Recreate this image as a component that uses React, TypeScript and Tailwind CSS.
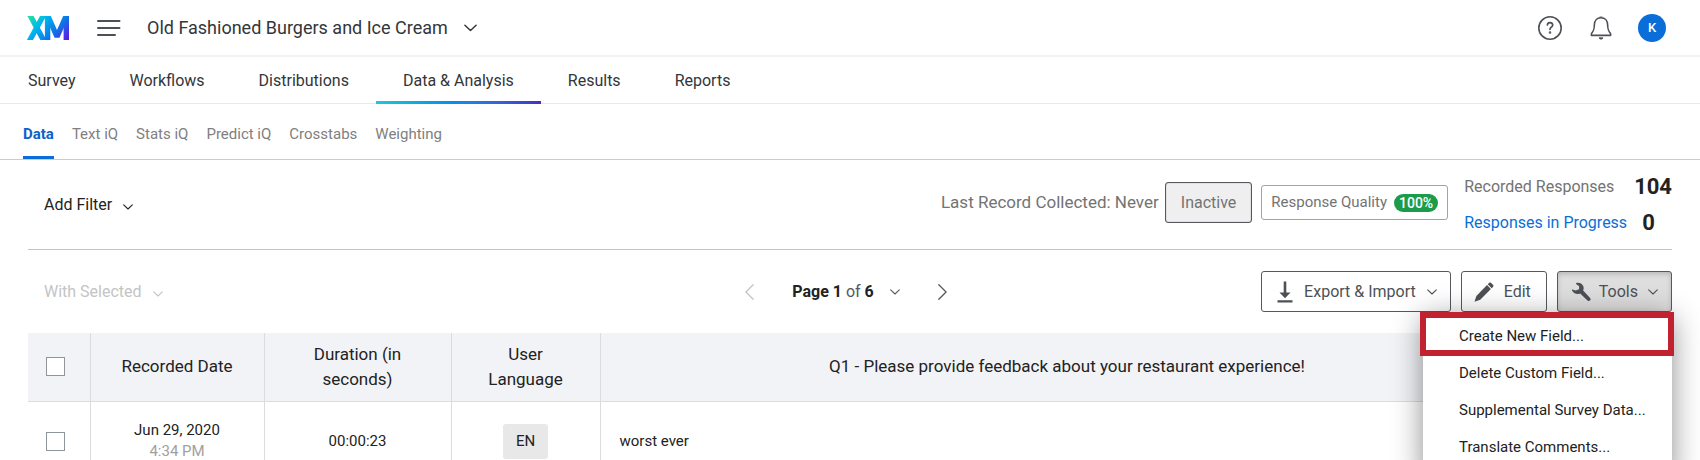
import { useState } from 'react'

const mainTabs = ['Survey', 'Workflows', 'Distributions', 'Data & Analysis', 'Results', 'Reports']
const subTabs = ['Data', 'Text iQ', 'Stats iQ', 'Predict iQ', 'Crosstabs', 'Weighting']
const toolItems = ['Delete Custom Field...', 'Supplemental Survey Data...', 'Translate Comments...']

const responses = [
  { date: 'Jun 29, 2020', time: '4:34 PM', duration: '00:00:23', language: 'EN', feedback: 'worst ever' },
]

function Chevron({ className = '' }: { className?: string }) {
  return (
    <svg viewBox="0 0 10 6" className={`fill-none stroke-current ${className}`} strokeWidth="1.1" strokeLinecap="round" strokeLinejoin="round" aria-hidden="true">
      <path d="M0.7 0.8 L5 5 L9.3 0.8" />
    </svg>
  )
}

function PageArrow({ className = '' }: { className?: string }) {
  return (
    <svg viewBox="0 0 9 16" className={`h-4 w-[9px] fill-none stroke-current ${className}`} strokeWidth="1.3" strokeLinecap="round" aria-hidden="true">
      <path d="M8.2 0.8 L0.9 8 L8.2 15.2" />
    </svg>
  )
}

function Logo() {
  return (
    <svg viewBox="0 0 42 24" className="h-6 w-[42px]" aria-label="XM">
      <defs>
        <linearGradient id="logo" x1="4" y1="0" x2="36" y2="28" gradientUnits="userSpaceOnUse">
          <stop offset="0" stopColor="#21dbaa" />
          <stop offset="0.3" stopColor="#00b4ef" />
          <stop offset="0.65" stopColor="#0a78e8" />
          <stop offset="1" stopColor="#5f1ae5" />
        </linearGradient>
      </defs>
      <g stroke="url(#logo)" fill="none" strokeWidth="5.4">
        <path d="M2.4 -2 L17.5 26" />
        <path d="M17.2 -2 L1.8 26" />
        <path d="M20.6 26 V-2.001 L20.61 -2" />
        <path d="M39.3 26 V-2.001 L39.31 -2" />
        <path d="M20 -2 L29.3 19 H30.7 L40 -2" />
      </g>
    </svg>
  )
}

function Header() {
  return (
    <header className="flex h-[57px] items-center border-b-2 border-[#f2f2f2] pl-[27px] pr-[34px]">
      <Logo />
      <button aria-label="Menu" className="ml-7 text-[#4d5156]">
        <svg viewBox="0 0 24 16" className="h-4 w-6 fill-none stroke-current" strokeWidth="2" strokeLinecap="round">
          <path d="M1 1 H22.5 M1 8 H22.5 M1 15 H18" />
        </svg>
      </button>
      <button className="ml-[26px] flex items-center gap-4 text-lg text-[#32363a]">
        Old Fashioned Burgers and Ice Cream
        <Chevron className="h-[8px] w-[13px]" />
      </button>
      <div className="ml-auto flex items-center text-[#4d5156]">
        <button aria-label="Help">
          <svg viewBox="0 0 24 24" className="size-6 fill-none stroke-current" strokeWidth="1.6" strokeLinecap="round">
            <circle cx="12" cy="12" r="11.2" />
            <path d="M9.4 9 C9.6 5.7 14.7 5.8 14.7 9.1 C14.7 11.2 12 11.2 12 13.3" strokeWidth="1.7" />
            <circle cx="12" cy="16.5" r="0.5" />
          </svg>
        </button>
        <button aria-label="Notifications" className="ml-7">
          <svg viewBox="0 0 22 24" className="h-6 w-[22px] fill-none stroke-current" strokeWidth="1.6" strokeLinejoin="round">
            <path d="M11 1.8 C6.8 1.8 4.5 4.8 4.4 8.6 C4.3 13.8 3.6 15 1.4 17.8 V19.4 H20.6 V17.8 C18.4 15 17.7 13.8 17.6 8.6 C17.5 4.8 15.2 1.8 11 1.8 Z" />
            <path d="M9 21.8 H13 C12.7 23.6 9.3 23.6 9 21.8 Z M9.5 1 H12.5" className="fill-current" strokeWidth="0.8" />
          </svg>
        </button>
        <button className="ml-[26px] size-7 rounded-full bg-[#0b6ed8] text-[13px] font-medium text-white">K</button>
      </div>
    </header>
  )
}

function DownloadIcon() {
  return (
    <svg viewBox="0 0 16 22" className="h-[22px] w-4 fill-current" aria-hidden="true">
      <path d="M6.7 0.5 H9.3 V11.5 H13.5 L8 17.3 L2.5 11.5 H6.7 Z M0.5 19.2 H15.5 V21.4 H0.5 Z" />
    </svg>
  )
}

function PencilIcon() {
  return (
    <svg viewBox="0 0 20 20" className="size-5 fill-current" aria-hidden="true">
      <path d="M0.5 19.7 L2.4 14 L13 2.9 L16.9 7 L6.2 17.8 Z" />
      <path d="M13.7 2.2 L15 0.9 C15.6 0.3 16.5 0.3 17.1 0.9 L19 2.8 C19.6 3.4 19.6 4.3 19 4.9 L17.7 6.2 Z" />
    </svg>
  )
}

function WrenchIcon() {
  return (
    <svg viewBox="0 0 24 24" className="size-5 fill-current" aria-hidden="true">
      <path d="M6.3 1.2 C9.8 0.2 13.8 1.8 14.9 5.4 C15.4 7 15.2 8.6 14.6 10.1 L22.9 19.2 C23.8 20.3 23.7 21.5 22.8 22.3 C21.9 23.1 20.7 23 19.8 22.1 L10.9 13.8 C7.3 15.5 2.7 13.8 1 9.7 L1.7 9 L5.6 10.1 L9.7 8.6 L9.8 5.2 L6 2.3 Z" />
    </svg>
  )
}

function ToolsMenu() {
  return (
    <div className="absolute right-0 top-full z-10 w-[249px] bg-white pb-3 text-[15px] text-[#222] shadow-[0_6px_28px_rgba(0,0,0,0.45)]">
      <button className="-mb-px -ml-[3px] flex h-11 w-[254px] items-center whitespace-nowrap border-6 border-[#c2222f] bg-white pl-[33px] pt-1">
        Create New Field...
      </button>
      {toolItems.map((item) => (
        <button key={item} className="flex h-[37px] w-full items-center whitespace-nowrap pl-9">
          {item}
        </button>
      ))}
    </div>
  )
}

function Checkbox({ label }: { label: string }) {
  return (
    <input type="checkbox" aria-label={label} className="mx-auto block size-[19px] appearance-none border border-[#8e959c] bg-white checked:bg-[#0b6ed8]" />
  )
}

export default function App() {
  const [tab, setTab] = useState('Data & Analysis')
  const [subTab, setSubTab] = useState('Data')
  const [toolsOpen, setToolsOpen] = useState(true)

  return (
    <div className="h-screen overflow-hidden bg-white font-[Roboto,'Liberation_Sans',sans-serif] text-base text-[#222]">
      <Header />
      <nav className="flex h-[47px] border-b border-[#e8e8e8] pl-px text-[#32363a]">
        {mainTabs.map((t) => (
          <button key={t} onClick={() => setTab(t)} className="relative px-[27px] pt-0.5">
            {t}
            {tab === t && (
              <span className="absolute inset-x-0 -bottom-px h-[3px] bg-linear-to-r from-[#21c9d0] via-[#0a8af0] to-[#4030c8]" />
            )}
          </button>
        ))}
      </nav>
      <nav className="flex h-14 gap-[18px] border-b border-[#ccc] pl-[23px] text-[15px] text-[#808080]">
        {subTabs.map((t) => (
          <button
            key={t}
            onClick={() => setSubTab(t)}
            className={`border-b-3 pt-2 ${subTab === t ? 'border-[#0b6ed8] font-bold text-[#0b62cc]' : 'border-transparent'}`}
          >
            {t}
          </button>
        ))}
      </nav>

      <main className="px-7">
        <section className="flex h-[90px] items-center justify-between border-b border-[#c4c4c4] pl-4">
          <button className="flex items-center gap-[11px]">
            Add Filter
            <Chevron className="mt-1 h-[6px] w-[10px]" />
          </button>
          <div className="flex items-center text-[#737373]">
            <div className="mb-1 flex items-center">
              <span className="mr-[6px] text-[17px]">Last Record Collected: Never</span>
              <button className="h-[41px] rounded-[3px] border border-[#55595e] bg-[#efefef] px-[15px] shadow-[inset_0_0_1px_#55595e]">Inactive</button>
              <button className="ml-[9px] flex h-[35px] items-center gap-[7px] rounded-[3px] border border-[#a3a3a3] px-[9px] text-[15px]">
                Response Quality
                <span className="rounded-full bg-[#1c9c4b] px-[5px] text-sm leading-[18px] font-medium text-white">100%</span>
              </button>
            </div>
            <dl className="ml-4 grid grid-cols-[auto_auto] items-center gap-x-[7px]">
              <dt>Recorded Responses</dt>
              <dd className="text-right text-[22px] leading-9 font-bold text-[#222]">104</dd>
              <dt><a href="#progress" className="text-[#0b6ed8]">Responses in Progress</a></dt>
              <dd className="pl-2 text-[22px] leading-9 font-bold text-[#222]">0</dd>
            </dl>
          </div>
        </section>

        <section className="grid h-[83px] grid-cols-[1fr_auto_1fr] items-center">
          <button disabled className="flex items-center gap-[11px] pl-4 text-[#c4c4c4]">
            With Selected
            <Chevron className="mt-1 h-[6px] w-[10px]" />
          </button>
          <div className="mr-2 flex items-center">
            <button disabled aria-label="Previous page" className="text-[#c4c4c4]">
              <PageArrow />
            </button>
            <button className="mx-[38px] flex items-center gap-4">
              <span><b>Page 1</b> <span className="text-[#55595e]">of</span> <b>6</b></span>
              <Chevron className="h-[6px] w-[10px] text-[#55595e]" />
            </button>
            <button aria-label="Next page" className="text-[#55595e]">
              <PageArrow className="rotate-180" />
            </button>
          </div>
          <div className="flex justify-end gap-[10px] text-[#4d5156]">
            <button className="flex h-[41px] items-center rounded-[3px] border border-[#55595e] pl-[15px] pr-[13px]">
              <DownloadIcon />
              <span className="mx-[11px]">Export &amp; Import</span>
              <Chevron className="h-[6px] w-[10px]" />
            </button>
            <button className="flex h-[41px] items-center gap-[10px] rounded-[3px] border border-[#55595e] pl-3 pr-[15px]">
              <PencilIcon />
              Edit
            </button>
            <div className="relative">
              <button
                aria-expanded={toolsOpen}
                onClick={() => setToolsOpen(!toolsOpen)}
                className="flex h-[41px] items-center rounded-[3px] border border-[#55595e] bg-[#dedede] px-[13px] shadow-[inset_0_2px_5px_rgba(0,0,0,0.18)]"
              >
                <WrenchIcon />
                <span className="ml-2 mr-[10px]">Tools</span>
                <Chevron className="h-[6px] w-[10px]" />
              </button>
              {toolsOpen && <ToolsMenu />}
            </div>
          </div>
        </section>

        <table className="w-full table-fixed border-collapse text-center text-[15px]">
          <colgroup>
            <col className="w-[62px]" />
            <col className="w-[174px]" />
            <col className="w-[187px]" />
            <col className="w-[149px]" />
            <col />
            <col className="w-[138px]" />
          </colgroup>
          <thead className="bg-[#f2f3f7] text-[17px] leading-[25px]">
            <tr className="h-[68px] border-b border-[#dcdcdc] *:font-normal">
              <th className="border-r border-[#dcdcdc] pr-[6px]"><Checkbox label="Select all" /></th>
              <th className="border-r border-[#dcdcdc] px-6">Recorded Date</th>
              <th className="border-r border-[#dcdcdc] px-11">Duration (in seconds)</th>
              <th className="border-r border-[#dcdcdc] px-6">User Language</th>
              <th className="border-r border-[#dcdcdc]">Q1 - Please provide feedback about your restaurant experience!</th>
              <th />
            </tr>
          </thead>
          <tbody>
            {responses.map((r) => (
              <tr key={r.date} className="h-20 border-b border-[#dcdcdc]">
                <td className="border-r border-[#dcdcdc] pr-[6px]"><Checkbox label={`Select ${r.date}`} /></td>
                <td className="border-r border-[#dcdcdc] leading-[21px]">
                  {r.date}
                  <div className="text-[#a0a0a0]">{r.time}</div>
                </td>
                <td className="border-r border-[#dcdcdc]">{r.duration}</td>
                <td className="border-r border-[#dcdcdc]">
                  <span className="inline-block rounded-[3px] bg-[#e8e8e8] px-[13px] leading-[35px]">{r.language}</span>
                </td>
                <td className="border-r border-[#dcdcdc] pl-[19px] text-left">{r.feedback}</td>
                <td />
              </tr>
            ))}
          </tbody>
        </table>
      </main>
    </div>
  )
}
